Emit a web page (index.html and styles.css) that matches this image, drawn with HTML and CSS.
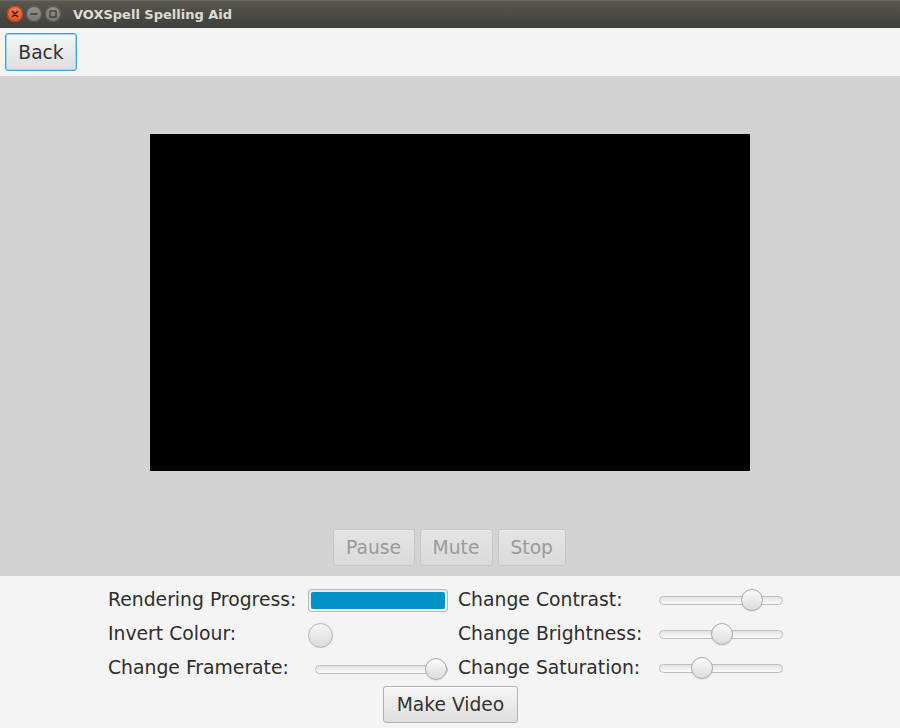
FILE: index.html
```html
<!DOCTYPE html>
<html>
<head>
<meta charset="utf-8">
<link rel="stylesheet" href="styles.css">
</head>
<body>
<div class="window">
  <div class="titlebar">
    <div class="winbtns">
      <span class="wb close"><svg width="16" height="16" viewBox="0 0 16 16"><path d="M5.5 5.5 L10.5 10.5 M10.5 5.5 L5.5 10.5" stroke="#4a1c0e" stroke-width="1.5" stroke-linecap="round"/></svg></span>
      <span class="wb"><svg width="16" height="16" viewBox="0 0 16 16"><path d="M4.5 8 H11.5" stroke="#3c3b37" stroke-width="1.5"/></svg></span>
      <span class="wb"><svg width="16" height="16" viewBox="0 0 16 16"><rect x="5" y="5" width="6" height="6" fill="none" stroke="#3c3b37" stroke-width="1.3"/></svg></span>
    </div>
    <span class="title">VOXSpell Spelling Aid</span>
  </div>
  <div class="toolbar">
    <button class="btn focused">Back</button>
  </div>
  <div class="stage">
    <div class="video"></div>
    <div class="playback">
      <button class="btn disabled">Pause</button>
      <button class="btn disabled">Mute</button>
      <button class="btn disabled">Stop</button>
    </div>
  </div>
  <div class="panel">
    <div class="grid">
      <span class="label">Rendering Progress:</span>
      <div class="progress"><div class="bar"></div></div>
      <span class="label">Change Contrast:</span>
      <div class="slider"><div class="track"></div><div class="thumb" style="left:82px"></div></div>

      <span class="label">Invert Colour:</span>
      <div class="check"></div>
      <span class="label">Change Brightness:</span>
      <div class="slider"><div class="track"></div><div class="thumb" style="left:52px"></div></div>

      <span class="label">Change Framerate:</span>
      <div class="slider fr"><div class="track"></div><div class="thumb" style="left:110px"></div></div>
      <span class="label">Change Saturation:</span>
      <div class="slider"><div class="track"></div><div class="thumb" style="left:32px"></div></div>
    </div>
    <div class="make">
      <button class="btn">Make Video</button>
    </div>
  </div>
</div>
</body>
</html>
```

FILE: styles.css
```css
* { box-sizing: border-box; }
html, body { margin: 0; padding: 0; }
body {
  width: 900px;
  height: 728px;
  overflow: hidden;
  font-family: "DejaVu Sans", sans-serif;
  background: #f4f4f4;
}
.window { width: 900px; height: 728px; display: flex; flex-direction: column; }
.titlebar {
  height: 28px;
  background: linear-gradient(#5a5751, #3f3e3a);
  display: flex;
  align-items: center;
  border-top: 1px solid #6a6862;
}
.winbtns { display: flex; gap: 3px; padding-left: 7px; margin-top: -1px; }
.wb {
  width: 16px; height: 16px; border-radius: 50%;
  background: linear-gradient(#96948e, #76746f);
  display: flex;
  box-shadow: inset 0 0 0 1px #55534e;
}
.wb.close { background: linear-gradient(#f47a50, #e0501f); box-shadow: inset 0 0 0 1px #b8401a; }
.title {
  margin-left: 12px;
  color: #dfdbd2;
  font-weight: bold;
  font-size: 13px;
  margin-top: -1px;
}
.toolbar {
  height: 48px;
  background: #f4f4f4;
  padding: 5px 0 0 5px;
}
.btn {
  font-family: "DejaVu Sans", sans-serif;
  font-size: 18.7px;
  color: #333;
  background: linear-gradient(#f6f6f6, #dedede);
  border: 1px solid #b0b0b0;
  border-radius: 3px;
  height: 38px;
  padding: 0 12px;
  margin: 0;
  box-shadow: inset 0 1px 0 #fff;
}
.btn.focused {
  width: 72px;
  border: 1px solid #3aa6d8;
  box-shadow: 0 0 0 1px #9fd4ee inset, inset 0 1px 0 #fff;
}
.stage {
  height: 500px;
  background: #d3d3d3;
  display: flex;
  flex-direction: column;
  align-items: center;
  padding-top: 58px;
}
.video { width: 600px; height: 337px; background: #000; }
.playback { display: flex; gap: 5px; margin-top: 58px; margin-left: -2px; }
.btn.disabled {
  height: 37px;
  color: #9a9a9a;
  background: linear-gradient(#e4e4e4, #dadada);
  border-color: #c6c6c6;
  box-shadow: inset 0 1px 0 #ececec;
}
.playback .btn:nth-child(1) { width: 82px; }
.playback .btn:nth-child(2) { width: 73px; }
.playback .btn:nth-child(3) { width: 68px; }
.panel {
  flex: 1;
  background: #f4f4f4;
  padding-top: 7px;
  display: flex;
  flex-direction: column;
}
.grid {
  display: grid;
  grid-template-columns: 200px 150px 201px 124px;
  grid-auto-rows: 34px;
  align-items: center;
  margin-left: 108px;
}
.label { font-size: 18.8px; color: #2e2e2e; line-height: 22px; }
.progress {
  width: 140px; height: 23px;
  border: 1px solid #b8b8b8;
  border-radius: 3px;
  background: linear-gradient(#e8e8e8, #f6f6f6);
  padding: 2px;
}
.bar { width: 100%; height: 100%; background: #0093c6; border-radius: 2px; }
.check {
  width: 25px; height: 25px; border-radius: 50%;
  border: 1px solid #b3b3b3;
  background: linear-gradient(#f4f4f4, #dcdcdc);
  margin-top: 2px;
}
.slider { position: relative; width: 124px; height: 22px; }
.slider.fr { width: 133px; margin-left: 7px; margin-top: 2px; }
.track {
  position: absolute; left: 0; right: 0; top: 7px; height: 9px;
  border: 1px solid #bdbdbd; border-radius: 5px;
  background: linear-gradient(#e4e4e4, #fafafa);
}
.thumb {
  position: absolute; top: 0; width: 22px; height: 22px; border-radius: 50%;
  border: 1px solid #a9a9a9;
  background: linear-gradient(#fafafa, #dcdcdc);
  box-shadow: 0 1px 1px rgba(0,0,0,0.08);
}
.make { margin-top: 1px; align-self: center; margin-left: 1px; }
.make .btn { width: 135px; height: 37px; padding: 0; }
```
